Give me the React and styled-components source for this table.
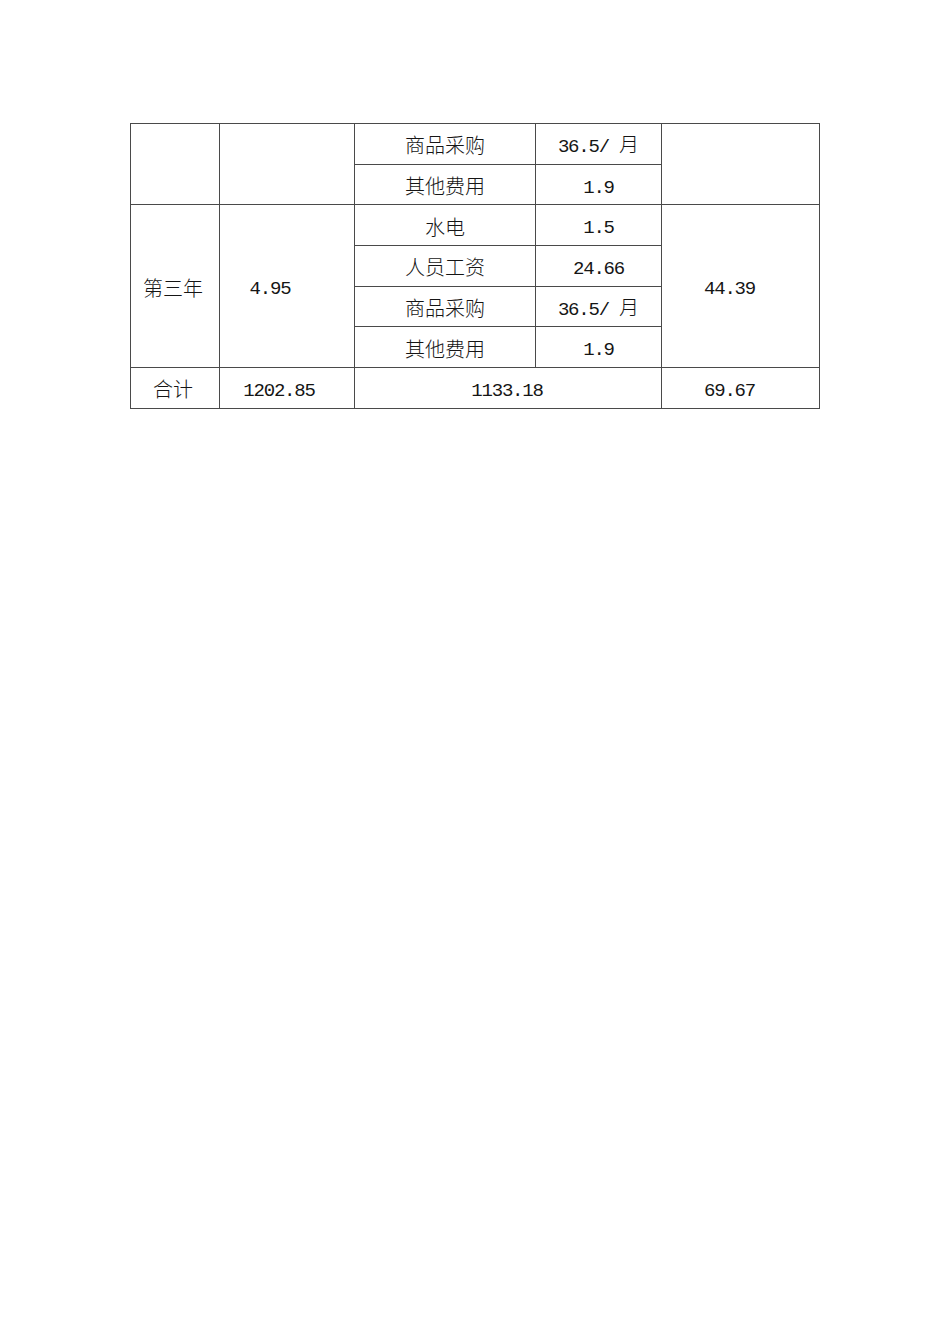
import React from 'react'
import styled, {createGlobalStyle} from 'styled-components'

const GlobalStyle = createGlobalStyle`
	html, body {
		margin: 0;
		padding: 0;
		background: #ffffff;
	}
	body {
		font-family: "Noto Sans CJK SC", "Liberation Serif", serif;
		color: #111111;
	}
`;

const Page = styled.div`
	width: 950px;
	height: 1344px;
	padding: 123px 0 0 130px;
	box-sizing: border-box;
`;

const Table = styled.table`
	border-collapse: collapse;
	table-layout: fixed;
	width: 689px;
	& td {
		border: 1px solid #4a4a4a;
		height: 36.7px;
		padding: 3px 0 0 0;
		text-align: center;
		vertical-align: middle;
		font-size: 20px;
		font-weight: 300;
		line-height: 1;
		color: #151515;
		white-space: nowrap;
	}
`;

const Cell = styled.td`
	&& {
		padding-right: ${p => p.$shift || 0}px;
	}
`;

const Num = styled.span`
	font-family: "Liberation Mono", "DejaVu Sans Mono", monospace;
	font-size: 19px;
	font-weight: 400;
	letter-spacing: -1.2px;
`;

const rowsYear3 = [
	{item: '水电', cost: '1.5'},
	{item: '人员工资', cost: '24.66'},
	{item: '商品采购', cost: '36.5/ ', unit: '月'},
	{item: '其他费用', cost: '1.9'},
];

const App = () => (
	<React.Fragment>
		<GlobalStyle/>
		<Page>
			<Table>
				<colgroup>
					<col style={{width: 89}}/>
					<col style={{width: 135}}/>
					<col style={{width: 181}}/>
					<col style={{width: 126}}/>
					<col style={{width: 158}}/>
				</colgroup>
				<tbody>
					<tr>
						<Cell rowSpan={2}></Cell>
						<Cell rowSpan={2}></Cell>
						<Cell>商品采购</Cell>
						<Cell><Num>36.5/ </Num>月</Cell>
						<Cell rowSpan={2}></Cell>
					</tr>
					<tr>
						<Cell>其他费用</Cell>
						<Cell><Num>1.9</Num></Cell>
					</tr>
					{rowsYear3.map((r, i) => (
						<tr key={r.item}>
							{i === 0 && <Cell rowSpan={4} $shift={4}>第三年</Cell>}
							{i === 0 && <Cell rowSpan={4} $shift={34}><Num>4.95</Num></Cell>}
							<Cell>{r.item}</Cell>
							<Cell><Num>{r.cost}</Num>{r.unit}</Cell>
							{i === 0 && <Cell rowSpan={4} $shift={22}><Num>44.39</Num></Cell>}
						</tr>
					))}
					<tr>
						<Cell $shift={4}>合计</Cell>
						<Cell $shift={16}><Num>1202.85</Num></Cell>
						<Cell colSpan={2} $shift={2}><Num>1133.18</Num></Cell>
						<Cell $shift={22}><Num>69.67</Num></Cell>
					</tr>
				</tbody>
			</Table>
		</Page>
	</React.Fragment>
)

export default App
